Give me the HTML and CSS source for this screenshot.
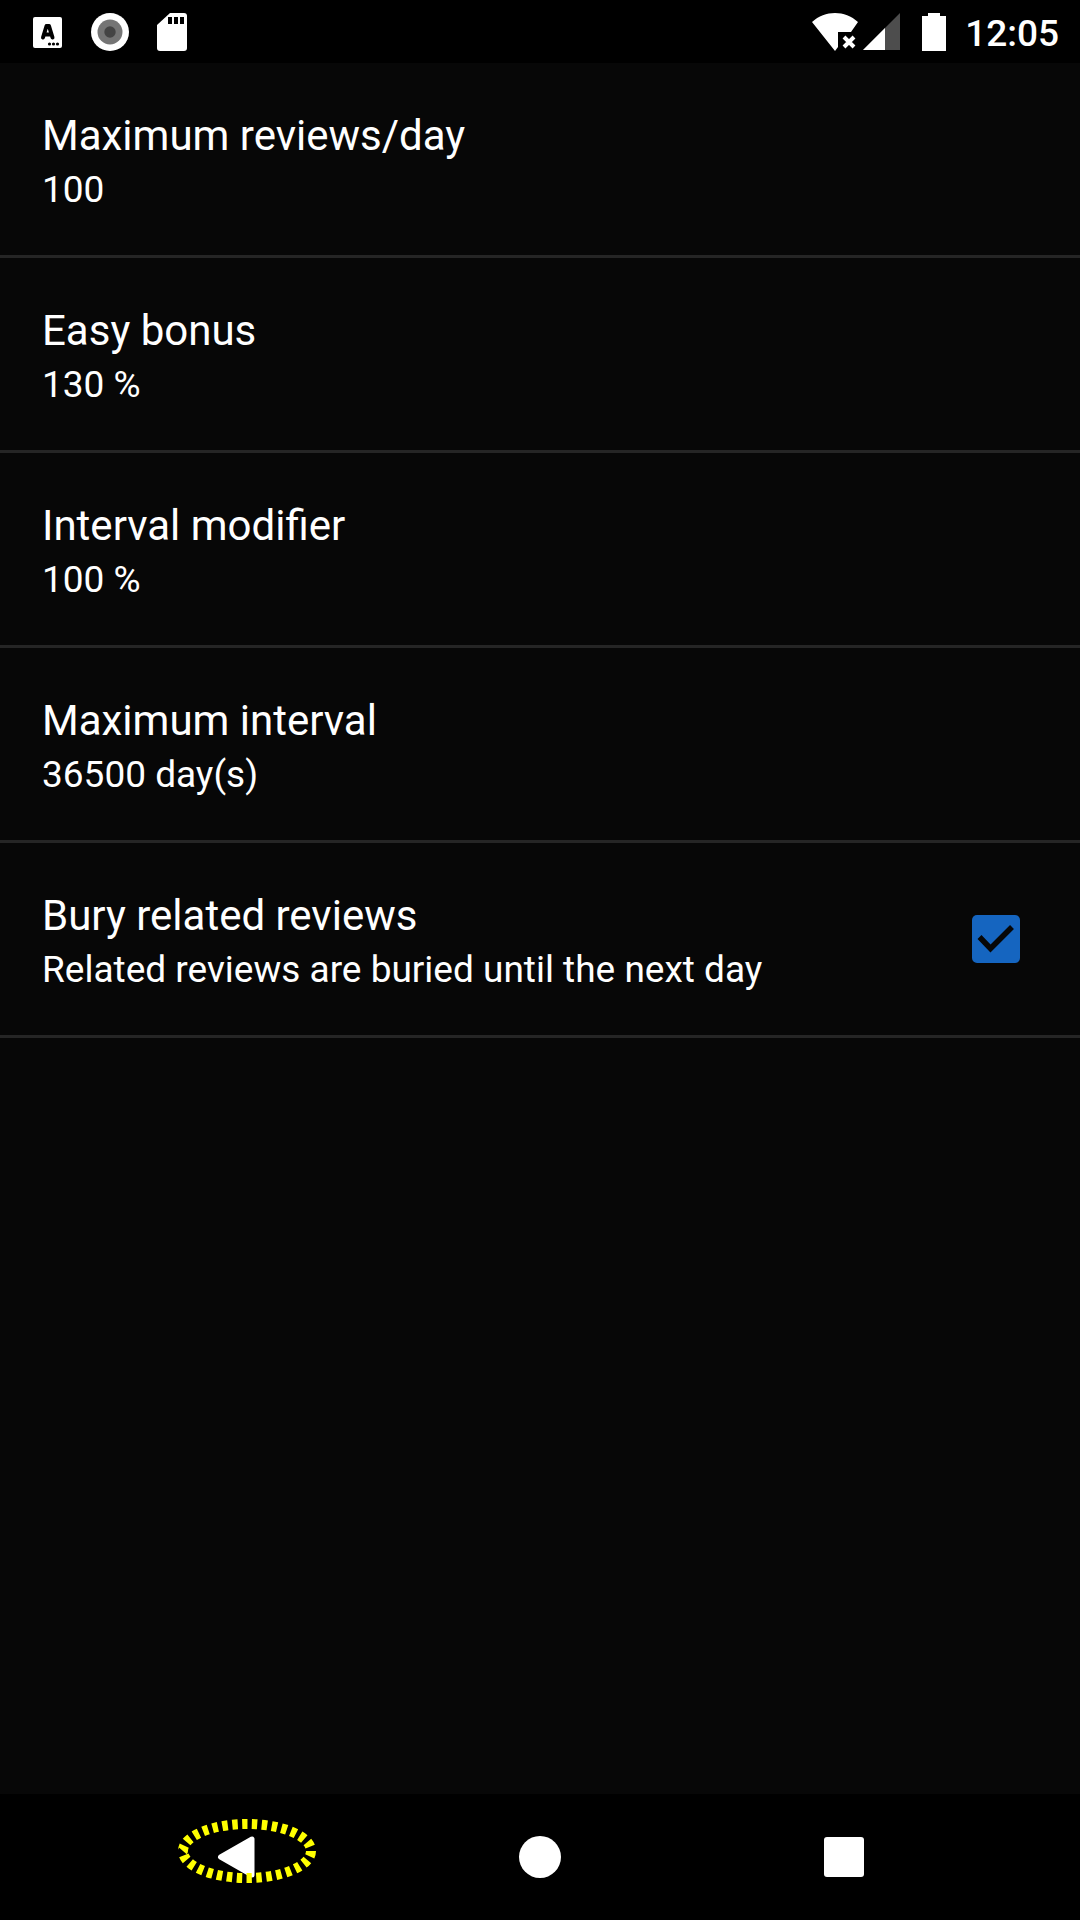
FILE: index.html
```html
<!DOCTYPE html>
<html lang="en">
<head>
<meta charset="utf-8">
<meta name="viewport" content="width=device-width, initial-scale=1">
<title>Reviews</title>
<link rel="stylesheet" href="styles.css">
</head>
<body>
<header class="status-bar">
  <div class="notifications">
    <svg class="status-icon" viewBox="0 0 38 38" aria-hidden="true">
      <rect x="4" y="4" width="29" height="31" rx="2" fill="#fff"/>
      <path d="M14 24.500 17.500 13h2.500L23.500 24.500M15 21.500h7" fill="none" stroke="#000" stroke-width="4" stroke-linejoin="round" stroke-linecap="round"/>
      <circle cx="20.500" cy="31" r="1.600"/><circle cx="24.500" cy="31" r="1.600"/><circle cx="28.500" cy="31" r="1.600"/>
    </svg>
    <svg class="status-icon" viewBox="0 0 38 38" aria-hidden="true">
      <circle cx="19" cy="19" r="19" fill="#fff"/>
      <circle cx="19" cy="19" r="12.500" fill="#757575"/>
      <circle cx="19" cy="19" r="5.700" fill="#444"/>
    </svg>
    <svg class="status-icon" viewBox="0 0 38 38" aria-hidden="true">
      <path d="M17 0h14a3 3 0 0 1 3 3v32a3 3 0 0 1-3 3H7a3 3 0 0 1-3-3V12Z" fill="#fff"/>
      <path d="M15 4h4v7h-4zM21 4h4v7h-4zM27 4h4v7h-4z"/>
    </svg>
  </div>
  <div class="system">
    <svg class="wifi" viewBox="0 0 46 38" aria-hidden="true">
      <path d="M0 9C13-3 33-3 46 9L39 19H26V34L23 38Z" fill="#fff"/>
      <path d="m32 24 10 10m0-10-10 10" stroke="#fff" stroke-width="4" fill="none"/>
    </svg>
    <svg class="signal" viewBox="0 0 37 38" aria-hidden="true">
      <path d="M37 0v37H0Z" fill="#4d4d4d"/>
      <path d="M22 15v22H0Z" fill="#fff"/>
    </svg>
    <svg class="battery" viewBox="0 0 24 38" aria-hidden="true">
      <path d="M6 0h12v3h6v35H0V3h6Z" fill="#fff"/>
    </svg>
    <time class="clock">12:05</time>
  </div>
</header>
<main class="settings">
  <ul class="list">
    <li class="row"><div class="text"><div class="title">Maximum reviews/day</div><div class="summary">100</div></div></li>
    <li class="row"><div class="text"><div class="title">Easy bonus</div><div class="summary">130 %</div></div></li>
    <li class="row"><div class="text"><div class="title">Interval modifier</div><div class="summary">100 %</div></div></li>
    <li class="row"><div class="text"><div class="title">Maximum interval</div><div class="summary">36500 day(s)</div></div></li>
    <li class="row">
      <label class="text" for="bury"><span class="title">Bury related reviews</span><span class="summary">Related reviews are buried until the next day</span></label>
      <span class="check">
        <input class="check-input" type="checkbox" id="bury" checked>
        <svg class="check-mark" viewBox="0 0 48 48" aria-hidden="true"><path d="m7.500 22 11 11.500L40 12" fill="none" stroke="#070707" stroke-width="5.500"/></svg>
      </span>
    </li>
  </ul>
</main>
<nav class="nav-bar">
  <button class="nav-button" type="button" aria-label="Back">
    <svg class="nav-icon" viewBox="0 0 42 42" aria-hidden="true"><path d="M5.500 21 37 3v36Z" fill="#fff" stroke="#fff" stroke-width="5" stroke-linejoin="round"/></svg>
    <svg class="highlight" viewBox="0 0 140 64" aria-hidden="true"><ellipse cx="70" cy="32" rx="64" ry="27" pathLength="300" fill="none" stroke="#ff0" stroke-width="10" stroke-dasharray="5.500 4.500"/></svg>
  </button>
  <button class="nav-button" type="button" aria-label="Home">
    <svg class="nav-icon" viewBox="0 0 42 42" aria-hidden="true"><circle cx="21" cy="21" r="21" fill="#fff"/></svg>
  </button>
  <button class="nav-button" type="button" aria-label="Recent apps">
    <svg class="nav-icon" viewBox="0 0 42 42" aria-hidden="true"><rect x="1" y="1" width="40" height="40" rx="3" fill="#fff"/></svg>
  </button>
</nav>
</body>
</html>
```
FILE: styles.css
```css
* {
  box-sizing: border-box;
}

body {
  display: flex;
  flex-direction: column;
  min-height: 100vh;
  margin: 0;
  background: #070707;
  color: #fff;
  font-family: Roboto, "Liberation Sans", sans-serif;
}

.status-bar {
  display: flex;
  align-items: center;
  justify-content: space-between;
  height: 63px;
  padding: 0 21px 0 29px;
  background: #000;
}

.notifications {
  display: flex;
  gap: 24px;
}

.status-icon {
  width: 38px;
  height: 38px;
}

.system {
  display: flex;
  align-items: center;
}

.wifi {
  width: 46px;
  height: 38px;
  margin-right: 5px;
}

.signal {
  width: 37px;
  height: 38px;
  margin-right: 22px;
}

.battery {
  width: 24px;
  height: 38px;
  margin-right: 19px;
}

.clock {
  padding-top: 4px;
  font-size: 37px;
  font-weight: 500;
  line-height: 44px;
}

.settings {
  flex: 1;
}

.list {
  margin: 0;
  padding: 0;
  list-style: none;
}

.row {
  display: flex;
  align-items: center;
  justify-content: space-between;
  padding: 0 60px 0 42px;
  border-bottom: 3px solid #252525;
}

.text {
  display: flex;
  flex-direction: column;
  gap: 7px;
  padding: 48px 0 43px;
}

.title {
  font-size: 42px;
  line-height: 50px;
}

.summary {
  font-size: 37px;
  line-height: 44px;
}

.check {
  position: relative;
  display: flex;
}

.check-input {
  width: 48px;
  height: 48px;
  margin: 0;
  border-radius: 5px;
  background: #333;
  appearance: none;
}

.check-input:checked {
  background: #1565c0;
}

.check-mark {
  position: absolute;
  inset: 0;
  visibility: hidden;
  pointer-events: none;
}

.check-input:checked + .check-mark {
  visibility: visible;
}

.nav-bar {
  display: flex;
  height: 126px;
  padding: 0 84px;
  background: #000;
}

.nav-button {
  position: relative;
  display: flex;
  flex: 1;
  align-items: center;
  justify-content: center;
  padding: 0;
  border: 0;
  background: none;
}

.nav-icon {
  width: 42px;
  height: 42px;
}

.highlight {
  position: absolute;
  top: 25px;
  left: calc(50% - 59px);
  width: 140px;
  height: 64px;
}
```
